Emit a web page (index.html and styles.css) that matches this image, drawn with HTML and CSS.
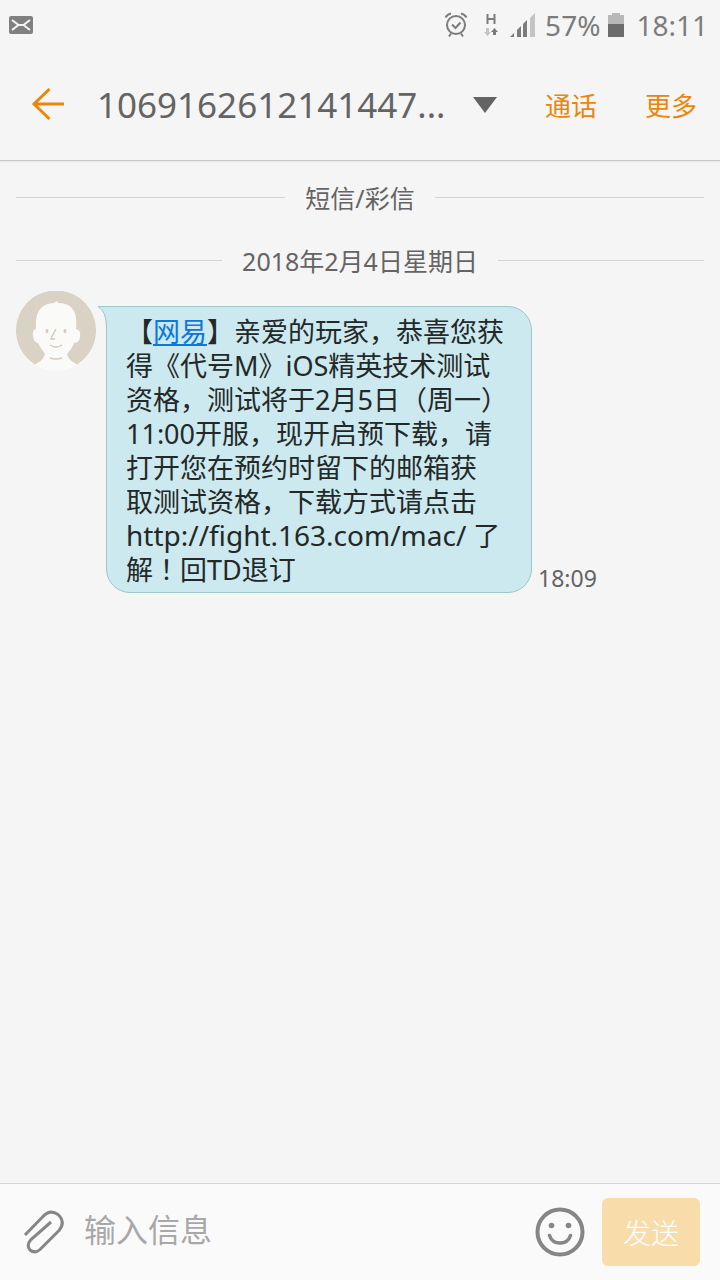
FILE: index.html
```html
<!DOCTYPE html>
<html lang="zh-CN">
<head>
<meta charset="utf-8">
<meta name="viewport" content="width=device-width, initial-scale=1">
<title>短信/彩信</title>
<link rel="stylesheet" href="styles.css">
</head>
<body>
<div class="screen">
  <div class="status">
    <svg class="status-mail" width="24" height="18" viewBox="0 0 24 18" aria-hidden="true">
      <rect width="24" height="18" rx="2" fill="#808080"/>
      <path d="M3 4l6.500 5L3 14M21 4l-6.500 5 6.500 5M9 9h6" fill="none" stroke="#f5f5f5" stroke-width="2"/>
    </svg>
    <div class="status-right">
      <svg class="status-alarm" width="24" height="26" viewBox="0 0 24 26" fill="none" stroke="#7c7c7c" stroke-width="2" aria-hidden="true">
        <circle cx="12" cy="13" r="9"/>
        <path d="M8 12.500l3.500 3.500 5-5.500M7 21.500l-2 3M17 21.500l2 3M1.500 5.500Q3 2.500 7 1.500M22.500 5.500Q21 2.500 17 1.500"/>
      </svg>
      <svg class="status-data" width="14" height="24" viewBox="0 0 14 24" aria-hidden="true">
        <path d="M3.500 1v10M10.500 1v10M3.500 6h7" fill="none" stroke="#7c7c7c" stroke-width="2"/>
        <path d="M2 15h3v4h2l-3.500 4L0 19h2z" fill="#c4c4c4"/>
        <path d="M9 22h3v-3h2l-3.500-4L7 19h2z" fill="#7c7c7c"/>
      </svg>
      <svg class="status-signal" width="25" height="25" viewBox="0 0 25 25" aria-hidden="true">
        <path d="M0 24l4-4v4zM7 24v-7l4-4v11zM13 24V11l4-4v17z" fill="#7c7c7c"/>
        <path d="M20 24V5l5-5v24z" fill="#c4c4c4"/>
      </svg>
      <span class="status-percent">57%</span>
      <svg class="status-battery" width="16" height="24" viewBox="0 0 16 24" aria-hidden="true">
        <path d="M0 2h4V0h8v2h4v10H0z" fill="#b8b8b8"/>
        <path d="M0 11h16v13H0z" fill="#6c6c6c"/>
      </svg>
      <span>18:11</span>
    </div>
  </div>

  <header class="header">
    <button class="icon-button back" type="button" aria-label="返回">
      <svg width="34" height="34" viewBox="0 0 34 34" fill="none" stroke="#e8870c" stroke-width="3">
        <path d="M18.500 1L3 16l15.500 15M3 16h30"/>
      </svg>
    </button>
    <button class="contact" type="button">
      <span class="contact-number">1069162612141447...</span>
      <svg width="24" height="16" viewBox="0 0 24 16" aria-hidden="true"><path d="M0 0h24L12 16z" fill="#646464"/></svg>
    </button>
    <button class="action" type="button">通话</button>
    <button class="action" type="button">更多</button>
  </header>

  <main class="thread">
    <div class="divider">短信/彩信</div>
    <div class="divider">2018年2月4日星期日</div>
    <div class="message">
      <svg class="avatar" width="80" height="80" viewBox="0 0 80 80" aria-hidden="true">
        <circle cx="40" cy="40" r="40" fill="#fafaf8"/>
        <path d="M19 73.500A40 40 0 1 1 61 73.500Q52 69 51 63Q56 58 58 52Q64 52 64 45Q65 39 60 38Q63 12 42 12L41 10L38 12Q18 13 20 38Q16 39 17 45Q18 52 22 52Q25 58 29 63Q28 69 19 73.500z" fill="#dad2c4"/>
        <path d="M40 38q-5 9-5 10h4M34 54q6 4 12 0M34 67q6 2 12 0" fill="none" stroke="#d2cabc" stroke-width="1.500"/>
        <ellipse cx="31" cy="40" rx="1.500" ry="2" fill="#d2cabc"/>
        <ellipse cx="49" cy="40" rx="1.500" ry="2" fill="#d2cabc"/>
      </svg>
      <div class="bubble">
        <svg class="tail" width="12" height="22" viewBox="0 0 12 22" aria-hidden="true">
          <path d="M0 0H12V22H9.500Q10 6 0 0z" fill="#cbe9ee"/>
          <path d="M12 .500H1Q9.500 5 9.500 22" fill="none" stroke="#9fc6c8"/>
        </svg>
        <p class="text">【<a href="#">网易</a>】亲爱的玩家，恭喜您获<br>得《代号M》iOS精英技术测试<br>资格，测试将于2月5日（周一）<br>11:00开服，现开启预下载，请<br>打开您在预约时留下的邮箱获<br>取测试资格，下载方式请点击<br><span class="url">http://fight.163.com/mac/</span> 了<br>解<span class="centered-mark" lang="zh-Hant">！</span>回TD退订</p>
      </div>
      <time class="time">18:09</time>
    </div>
  </main>

  <form class="composer">
    <button class="icon-button" type="button" aria-label="附件">
      <svg width="44" height="46" viewBox="0 0 44 46" fill="none" stroke="#868686" stroke-width="3">
        <path d="M3 26L21 7.500Q28 0 36 5.500Q44 13 37 21.500L18 40.500Q13 45 8 41Q4 36 9 30.500L29 13"/>
      </svg>
    </button>
    <input class="field" type="text" placeholder="输入信息" aria-label="输入信息">
    <button class="icon-button" type="button" aria-label="表情">
      <svg width="50" height="50" viewBox="0 0 50 50" fill="none" stroke="#868686" stroke-width="4">
        <circle cx="25" cy="25" r="22.500"/>
        <path d="M14.500 28.500Q17 36 25 36T35.500 28.500" stroke-width="3.500" stroke-linecap="round"/>
        <circle cx="16.500" cy="18.500" r="2.800" fill="#868686" stroke="none"/>
        <circle cx="33.500" cy="18.500" r="2.800" fill="#868686" stroke="none"/>
      </svg>
    </button>
    <button class="send" type="button">发送</button>
  </form>
</div>
</body>
</html>
```
FILE: styles.css
```css
* {
  box-sizing: border-box;
}

body {
  margin: 0;
  background: #f5f5f5;
  color: #646464;
  font-family: "Noto Sans", "Noto Sans CJK SC", sans-serif;
}

button,
input {
  margin: 0;
  padding: 0;
  border: 0;
  background: none;
  color: inherit;
  font: inherit;
}

svg {
  display: block;
  flex: none;
}

.screen {
  display: flex;
  flex-direction: column;
  min-height: 100vh;
}

.status {
  display: flex;
  align-items: center;
  justify-content: space-between;
  height: 50px;
  padding: 0 12px 0 9px;
  color: #7c7c7c;
  font-size: 28px;
  line-height: 50px;
}

.status-right {
  display: flex;
  align-items: center;
}

.status-data {
  margin-left: 16px;
}

.status-signal {
  margin-left: 12px;
}

.status-percent {
  margin: 0 8px 0 10px;
}

.status-battery {
  margin-right: 12px;
}

.header {
  display: flex;
  align-items: center;
  height: 111px;
  padding: 0 23px 0 31px;
  border-bottom: 1px solid #c8c8c8;
  box-shadow: 0 1px 1px #e8e8e8;
}

.icon-button {
  flex: none;
}

.contact {
  display: flex;
  flex: 1;
  align-items: center;
  justify-content: space-between;
  min-width: 0;
  margin: 0 0 0 32px;
}

.contact-number {
  font-size: 35px;
  line-height: 48px;
  white-space: nowrap;
}

.action {
  flex: none;
  margin-left: 48px;
  color: #e8870c;
  font-size: 26px;
}

.thread {
  flex: 1;
  padding: 4px 16px;
}

.divider {
  display: flex;
  align-items: center;
  gap: 20px;
  height: 61px;
  margin-top: 2px;
  font-size: 25px;
  line-height: 34px;
}

.divider::before,
.divider::after {
  content: "";
  flex: 1;
  height: 1px;
  background: #d4d4d4;
}

.message {
  display: flex;
  align-items: flex-start;
}

.bubble {
  position: relative;
  margin: 15px 0 0 10px;
  padding: 8px 19px 5px;
  border: 1px solid #9fc6c8;
  border-radius: 0 24px 24px 24px;
  background: #cbe9ee;
}

.tail {
  position: absolute;
  top: -1px;
  left: -10px;
}

.text {
  width: 386px;
  margin: 0;
  color: #242828;
  font-size: 27px;
  line-height: 34px;
}

.text a {
  color: #0a78dc;
}

.url {
  font-size: 28px;
  line-height: 30px;
}

.centered-mark {
  font-family: "Noto Sans CJK TC", sans-serif;
  line-height: 30px;
}

.time {
  align-self: flex-end;
  margin-left: 6px;
  font-size: 23px;
  line-height: 30px;
}

.composer {
  display: flex;
  align-items: center;
  height: 97px;
  padding: 0 20px 0 22px;
  border-top: 1px solid #d4d4d4;
  background: #fafafa;
}

.field {
  flex: 1;
  min-width: 0;
  height: 64px;
  margin: 0 17px 0 18px;
  padding-bottom: 6px;
  color: #646464;
  font-size: 32px;
}

.field::placeholder {
  color: #a8a8a8;
  opacity: 1;
}

.send {
  width: 98px;
  height: 68px;
  margin-left: 17px;
  border-radius: 6px;
  background: #f8dcaa;
  color: #fff;
  font-size: 28px;
  font-weight: 300;
}
```
